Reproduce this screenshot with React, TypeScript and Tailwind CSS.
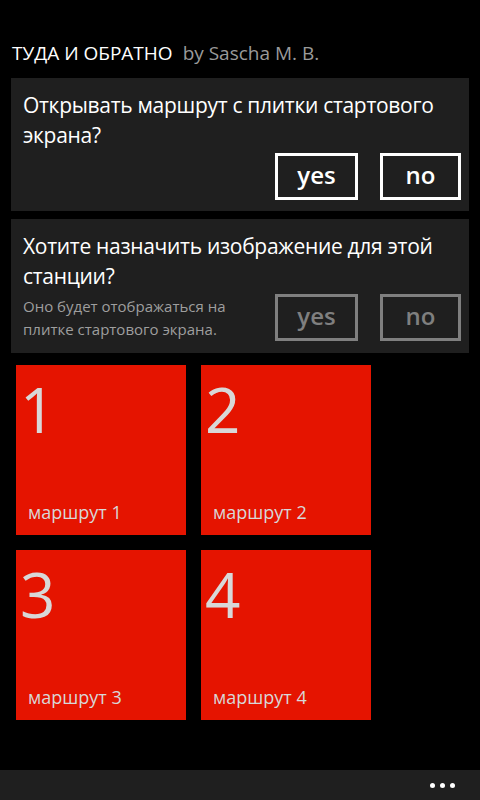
import React from "react";

const font = { fontFamily: '"Open Sans", "Noto Sans", sans-serif' };

function Btn({ label, dim }: { label: string; dim?: boolean }) {
  return (
    <div
      className={
        "flex items-center justify-center h-[47px] border-[3px] text-[24px] font-semibold leading-none " +
        (dim ? "border-[#7f7f7f] text-[#7f7f7f]" : "border-white text-white")
      }
    >
      <span className="-mt-[3px]">{label}</span>
    </div>
  );
}

function Tile({ n }: { n: number }) {
  return (
    <div className="w-[170px] h-[170px] bg-[#e51400] flex flex-col text-[#d8d8d8]">
      <div className="pl-[4px] pt-[13px] text-[62px] font-normal leading-[62px]">{n}</div>
      <div className="mt-auto pl-[12px] pb-[12px] text-[18px] leading-[22px]">маршрут {n}</div>
    </div>
  );
}

export default function App() {
  return (
    <div className="w-[480px] h-[800px] bg-black flex flex-col overflow-hidden" style={font}>
      <div className="h-[78px] pl-3 pt-[41px] text-[19px] leading-[25px] flex gap-[10px]">
        <span className="text-white">ТУДА И ОБРАТНО</span>
        <span className="text-[#9a9a9a]">by Sascha M. B.</span>
      </div>

      <div className="mx-[11px] flex flex-col gap-2">
        <div className="bg-[#1f1f1f] h-[133px] flex flex-col pl-3 pr-2 pt-[12px]">
          <div className="text-white text-[21px] leading-[30px] tracking-[-0.3px]">
            Открывать маршрут с плитки стартового экрана?
          </div>
          <div className="mt-auto mb-[11px] flex justify-end gap-[22px]">
            <div className="w-[83px]"><Btn label="yes" /></div>
            <div className="w-[81px]"><Btn label="no" /></div>
          </div>
        </div>

        <div className="bg-[#1f1f1f] h-[134px] flex flex-col pl-3 pr-2 pt-[12px]">
          <div className="text-white text-[21px] leading-[30px] tracking-[-0.3px]">
            Хотите назначить изображение для этой станции?
          </div>
          <div className="mt-auto mb-[12px] flex items-end">
            <div className="flex-1 text-[#9e9e9e] text-[15px] leading-[23px]">
              Оно будет отображаться на
              <br />
              плитке стартового экрана.
            </div>
            <div className="flex gap-[22px]">
              <div className="w-[83px]"><Btn label="yes" dim /></div>
              <div className="w-[81px]"><Btn label="no" dim /></div>
            </div>
          </div>
        </div>
      </div>

      <div className="mt-3 pl-4 grid grid-cols-[170px_170px] gap-[15px]">
        <Tile n={1} />
        <Tile n={2} />
        <Tile n={3} />
        <Tile n={4} />
      </div>

      <div className="mt-auto h-[30px] bg-[#1f1f1f] flex items-center justify-end pr-[25px] gap-[5px]">
        <span className="w-[5px] h-[5px] rounded-full bg-white" />
        <span className="w-[5px] h-[5px] rounded-full bg-white" />
        <span className="w-[5px] h-[5px] rounded-full bg-white" />
      </div>
    </div>
  );
}
